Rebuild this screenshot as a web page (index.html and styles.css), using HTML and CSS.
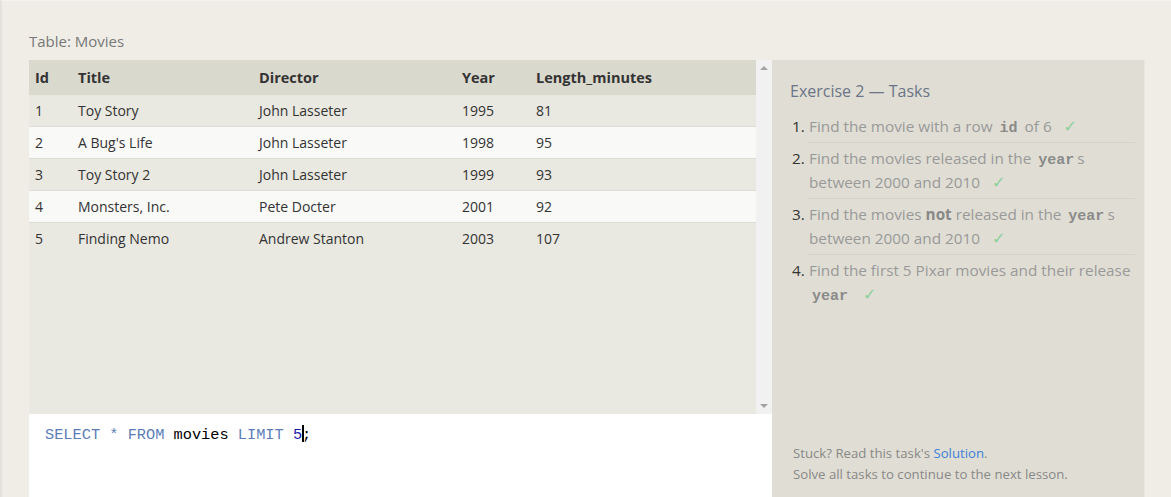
FILE: index.html
```html
<!DOCTYPE html>
<html>
<head>
<meta charset="utf-8">
<link rel="stylesheet" href="styles.css">
</head>
<body>
<div class="page">
  <div class="caption">Table: Movies</div>
  <div class="main">
    <div class="left">
      <div class="table-wrap">
        <div class="table-scroll">
          <table class="data">
            <thead>
              <tr><th class="c-id">Id</th><th class="c-title">Title</th><th class="c-dir">Director</th><th class="c-year">Year</th><th>Length_minutes</th></tr>
            </thead>
            <tbody>
              <tr><td>1</td><td>Toy Story</td><td>John Lasseter</td><td>1995</td><td>81</td></tr>
              <tr><td>2</td><td>A Bug's Life</td><td>John Lasseter</td><td>1998</td><td>95</td></tr>
              <tr><td>3</td><td>Toy Story 2</td><td>John Lasseter</td><td>1999</td><td>93</td></tr>
              <tr><td>4</td><td>Monsters, Inc.</td><td>Pete Docter</td><td>2001</td><td>92</td></tr>
              <tr><td>5</td><td>Finding Nemo</td><td>Andrew Stanton</td><td>2003</td><td>107</td></tr>
            </tbody>
          </table>
        </div>
        <div class="scrollbar">
          <span class="arrow up"></span>
          <span class="arrow down"></span>
        </div>
      </div>
      <div class="editor"><span class="kw">SELECT</span> <span class="kw">*</span> <span class="kw">FROM</span> <span class="id">movies</span> <span class="kw">LIMIT</span> <span class="num">5</span><span class="cursor"></span>;</div>
    </div>
    <div class="tasks">
      <div class="tasks-title">Exercise 2 — Tasks</div>
      <ol class="task-list">
        <li><span class="n">1.</span><span class="t">Find the movie with a row <code>id</code> of 6 <span class="check">✓</span></span></li>
        <li><span class="n">2.</span><span class="t">Find the movies released in the <code>year</code>s between 2000 and 2010 <span class="check">✓</span></span></li>
        <li><span class="n">3.</span><span class="t">Find the movies <b>not</b> released in the <code>year</code>s between 2000 and 2010 <span class="check">✓</span></span></li>
        <li><span class="n">4.</span><span class="t">Find the first 5 Pixar movies and their release <code>year</code> <span class="check">✓</span></span></li>
      </ol>
      <div class="stuck">
        <div>Stuck? Read this task's <a href="#">Solution</a>.</div>
        <div>Solve all tasks to continue to the next lesson.</div>
      </div>
    </div>
  </div>
</div>
</body>
</html>
```
FILE: styles.css
```css
html, body {
  margin: 0;
  padding: 0;
  height: 100%;
  overflow: hidden;
}
body {
  background: #efede6;
  font-family: "Open Sans", "Noto Sans", sans-serif;
  color: #333;
}
.page {
  border-left: 2px solid #e4e2dc;
  border-top: 1px solid #f5f3ee;
  height: 100%;
  box-sizing: border-box;
  padding: 30px 0 0 27px;
  display: flex;
  flex-direction: column;
}
.caption {
  font-size: 15px;
  color: #787878;
  height: 29px;
  line-height: 20px;
  flex: none;
}
.main {
  display: flex;
  flex: 1;
  min-height: 0;
}
.left {
  width: 743px;
  display: flex;
  flex-direction: column;
}
.table-wrap {
  display: flex;
  height: 354px;
  flex: none;
  background: #e9e8e1;
}
.table-scroll {
  flex: 1;
}
.data {
  width: 100%;
  border-collapse: collapse;
  font-size: 14px;
}
.data th {
  background: #dad9ce;
  text-align: left;
  font-weight: 700;
  font-size: 14.5px;
  height: 35px;
  padding: 0 6px;
  color: #333;
}
.data td {
  height: 31px;
  padding: 0 6px;
  border-bottom: 1px solid #dddcd5;
  color: #333;
}
.data tbody tr:nth-child(even) td {
  background: #f9f9f8;
}
.data tbody tr:last-child td {
  border-bottom: none;
}
.c-id { width: 31px; }
.c-title { width: 169px; }
.c-dir { width: 191px; }
.c-year { width: 62px; }
.scrollbar {
  width: 16px;
  background: #f1f1f1;
  display: flex;
  flex-direction: column;
  justify-content: space-between;
  align-items: center;
  padding: 6px 0;
  box-sizing: border-box;
}
.arrow {
  width: 0;
  height: 0;
  border-left: 4px solid transparent;
  border-right: 4px solid transparent;
}
.arrow.up { border-bottom: 4px solid #a3a3a3; }
.arrow.down { border-top: 4px solid #a3a3a3; }
.editor {
  flex: 1;
  background: #fff;
  font-family: "Liberation Mono", "DejaVu Sans Mono", monospace;
  font-size: 15.3px;
  padding: 11px 16px;
  color: #000;
  white-space: pre;
}
.editor .kw { color: #5b7db8; }
.editor .id { color: #000; }
.editor .num { color: #1a1aa6; }
.editor .cursor {
  display: inline-block;
  width: 2px;
  height: 17px;
  background: #000;
  vertical-align: -3px;
  margin-right: -2px;
}
.tasks {
  width: 373px;
  background: #e0ded4;
  border-right: 1px solid #e8e6df;
  padding: 20px 9px 0 18px;
  box-sizing: border-box;
  display: flex;
  flex-direction: column;
}
.tasks-title {
  font-size: 16px;
  color: #6b7488;
  line-height: 22px;
  margin-bottom: 9px;
}
.task-list {
  list-style: none;
  margin: 0;
  padding: 0;
  font-size: 15.3px;
  color: #999;
}
.task-list li {
  display: flex;
  line-height: 24px;
  padding: 3px 0 4px;
}
.task-list li + li {
  border-top: 1px solid #d4d2c9;
  margin-left: 18px;
}
.task-list li + li .n { margin-left: -16px; }
.task-list .n {
  color: #333;
  width: 17px;
  flex: none;
  margin-left: 2px;
}
.task-list code {
  font-family: "Liberation Mono", "DejaVu Sans Mono", monospace;
  font-weight: 700;
  font-size: 15px;
  line-height: 1;
  color: #8a8a8a;
  padding: 0 3px;
}
.task-list b { color: #888; }
.check {
  color: #8ccf9c;
  font-family: "DejaVu Sans", sans-serif;
  font-size: 16px;
  line-height: 1;
  margin-left: 8px;
}
.stuck {
  margin-top: auto;
  margin-bottom: 12px;
  font-size: 13.2px;
  line-height: 21px;
  color: #888;
  padding-left: 3px;
}
.stuck a {
  color: #3c7fd8;
  text-decoration: none;
}
```
